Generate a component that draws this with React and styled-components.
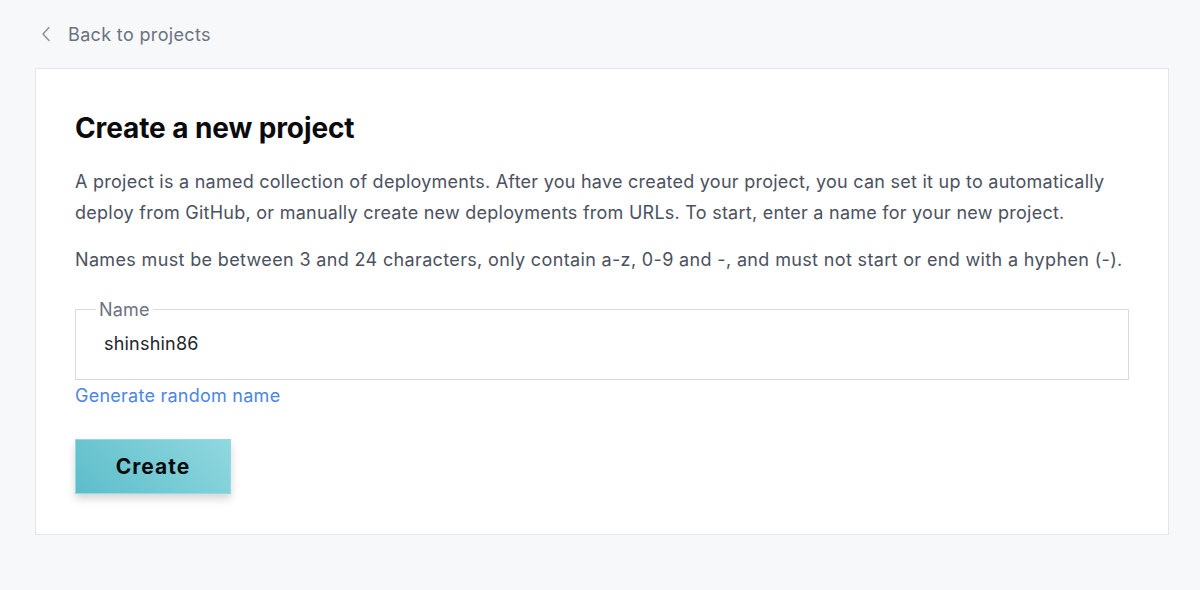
import React, { useState } from 'react';
import styled, { createGlobalStyle } from 'styled-components';

const GlobalStyle = createGlobalStyle`
  body {
    margin: 0;
    background: #f7f8fa;
    font-family: Inter, "Noto Sans", "Liberation Sans", sans-serif;
    -webkit-font-smoothing: antialiased;
  }
`;

const Page = styled.div`
  padding: 20px 31px 0 35px;
`;

const BackLink = styled.a`
  display: flex;
  align-items: center;
  gap: 17px;
  height: 28px;
  padding-left: 6px;
  color: #6b7280;
  font-size: 18px;
  letter-spacing: 0.35px;
  text-decoration: none;
  cursor: pointer;
`;

const Card = styled.section`
  margin-top: 20px;
  background: #fff;
  border: 1px solid #e3e5e9;
  padding: 42px 39px 40px;
`;

const Title = styled.h1`
  margin: 0 0 21px;
  font-size: 28px;
  line-height: 34px;
  font-weight: 700;
  color: #0b0b0d;
  letter-spacing: -0.1px;
`;

const Paragraph = styled.p`
  margin: 0 0 ${(p) => p.gap || 16}px;
  font-size: 18px;
  letter-spacing: ${(p) => p.spacing || 0.25}px;
  line-height: 31px;
  color: #4b5160;
`;

const Field = styled.fieldset`
  margin: 0;
  padding: 0 0 0 28px;
  height: 79px;
  border: 1px solid #d9dadd;
  display: flex;
  align-items: center;
`;

const Legend = styled.legend`
  margin-left: -8px;
  padding: 0 3px;
  font-size: 18px;
  letter-spacing: 0.2px;
  color: #6b7280;
`;

const Input = styled.input`
  border: none;
  outline: none;
  width: 100%;
  margin-top: -12px;
  font-family: inherit;
  font-size: 18px;
  letter-spacing: 0.2px;
  color: #23252b;
  background: transparent;
  padding: 0;
`;

const TextLink = styled.a`
  display: inline-block;
  margin-top: 5px;
  font-size: 18px;
  letter-spacing: 0.25px;
  color: #4a86e8;
  cursor: pointer;
`;

const CreateButton = styled.button`
  display: block;
  margin-top: 33px;
  width: 156px;
  height: 55px;
  border: 1px solid #93dbe2;
  background: linear-gradient(45deg, #5cbdca 0%, #90d8df 100%);
  box-shadow: 0 5px 8px rgba(0, 0, 0, 0.16);
  font-family: inherit;
  font-size: 21px;
  font-weight: 700;
  letter-spacing: 1px;
  color: #0b0b0d;
  cursor: pointer;
`;

const Chevron = () => (
  <svg width="10" height="16" viewBox="0 0 10 16" fill="none">
    <path d="M8 1.5 L2 8 L8 14.5" stroke="#8a8f99" strokeWidth="1.4" strokeLinecap="round" strokeLinejoin="round" />
  </svg>
);

export default function App() {
  const [name, setName] = useState('shinshin86');
  return (
    <>
      <GlobalStyle />
      <Page>
        <BackLink>
          <Chevron />
          Back to projects
        </BackLink>
        <Card>
          <Title>Create a new project</Title>
          <Paragraph>
            A project is a named collection of deployments. After you have created your project, you can set it up to automatically
            deploy from GitHub, or manually create new deployments from URLs. To start, enter a name for your new project.
          </Paragraph>
          <Paragraph gap={24} spacing={0.35}>
            Names must be between 3 and 24 characters, only contain a-z, 0-9 and -, and must not start or end with a hyphen (-).
          </Paragraph>
          <Field>
            <Legend>Name</Legend>
            <Input value={name} onChange={(e) => setName(e.target.value)} />
          </Field>
          <TextLink>Generate random name</TextLink>
          <CreateButton>Create</CreateButton>
        </Card>
      </Page>
    </>
  );
}
